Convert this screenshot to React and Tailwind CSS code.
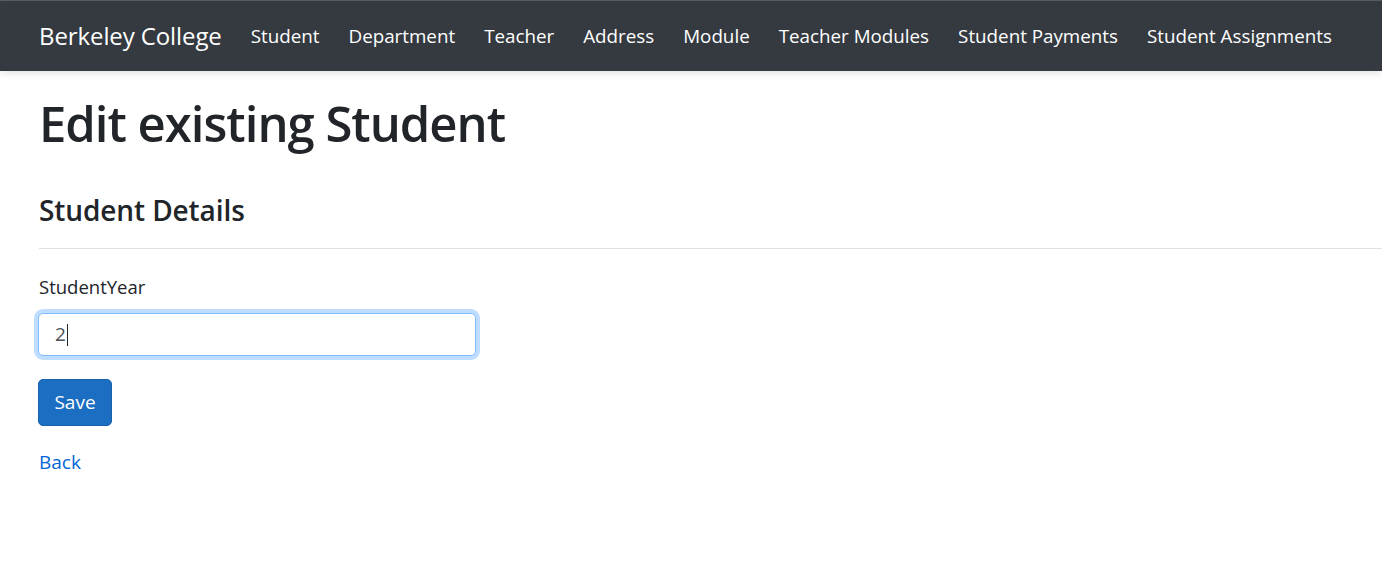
export default function App() {
  const links = ["Student", "Department", "Teacher", "Address", "Module", "Teacher Modules", "Student Payments", "Student Assignments"];
  return (
    <div className="min-h-[563px] bg-white text-[#212529]" style={{ fontFamily: '"Open Sans", "Noto Sans", sans-serif' }}>
      <div className="border-t border-[#5b5e62]">
        <nav className="relative z-10 flex h-[70px] items-center bg-[#343a40] pl-[39px] shadow-[0_2px_8px_rgba(0,0,0,0.12)]">
          <span className="mr-[29px] text-[24px] leading-none tracking-[-0.1px] text-white">Berkeley College</span>
          <div className="flex gap-[29px]">
            {links.map((l) => (
              <span key={l} className="text-[18.8px] leading-none text-white">{l}</span>
            ))}
          </div>
        </nav>
      </div>
      <main className="px-[39px]">
        <h1 className="pt-[23px] text-[49px] font-semibold leading-[1.2] tracking-[-1px]">Edit existing Student</h1>
        <h3 className="mt-[41px] text-[28px] font-semibold leading-[1.2] tracking-[-0.1px]">Student Details</h3>
        <hr className="mr-[-39px] mt-[21px] border-t border-[#dee2e6]" />
        <label className="mt-[24px] block text-[18.5px] leading-[1.5]">StudentYear</label>
        <div className="-ml-px mt-[12px] flex h-[43px] w-[438px] items-center rounded-[5px] border border-[#80bdff] bg-white px-[16px] shadow-[0_0_0_4px_rgba(0,123,255,0.25)]">
          <span className="text-[19px] text-[#495057]">2</span>
          <span className="ml-px h-[22px] w-px bg-[#212529]" />
        </div>
        <button className="-ml-px mt-[23px] flex h-[47px] w-[74px] items-center justify-center rounded-[5px] border border-[#1861ac] bg-[#1b6ec2] text-[19px] text-white">Save</button>
        <a className="mt-[22px] block text-[19px] text-[#0366d6]">Back</a>
      </main>
    </div>
  );
}
